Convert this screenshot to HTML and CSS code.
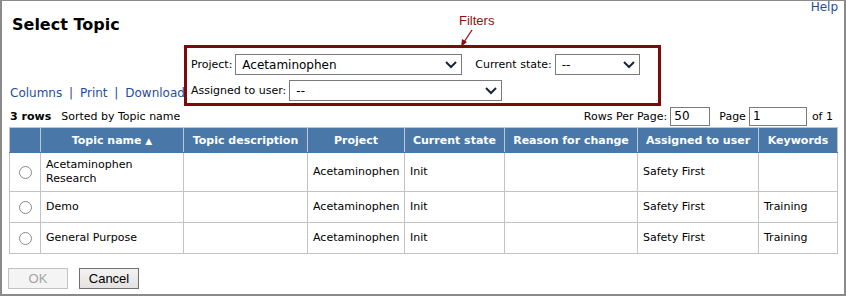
FILE: index.html
```html
<!DOCTYPE html>
<html lang="en">
<head>
    <meta charset="UTF-8">
    <title>Select Topic</title>
    <link rel="stylesheet" href="styles.css">
</head>
<body>
    <div class="window">
        <div class="top">
            <h1 class="title">Select Topic</h1>
            <a class="help" href="#">Help</a>
        </div>

        <div class="filter-row">
            <div class="links">
                <a href="#">Columns</a> <span class="sep">|</span>
                <a href="#">Print</a> <span class="sep">|</span>
                <a href="#">Download</a>
            </div>
            <div class="filters">
                <div class="note">Filters</div>
                <svg class="note-arrow" width="16" height="20" viewBox="0 0 16 20">
                    <line x1="13" y1="1" x2="5" y2="13" stroke="#8b1111" stroke-width="1.3"/>
                    <polygon points="2,18 3,10 8,13" fill="#8b1111"/>
                </svg>
                <div class="frow">
                    <label>Project:</label>
                    <div class="select sel-project">
                        <span>Acetaminophen</span>
                        <svg width="12" height="8" viewBox="0 0 12 8"><polyline points="1,1 6,6 11,1" fill="none" stroke="#1b2538" stroke-width="2"/></svg>
                    </div>
                    <label class="lbl-state">Current state:</label>
                    <div class="select sel-state">
                        <span>--</span>
                        <svg width="12" height="8" viewBox="0 0 12 8"><polyline points="1,1 6,6 11,1" fill="none" stroke="#1b2538" stroke-width="2"/></svg>
                    </div>
                </div>
                <div class="frow">
                    <label>Assigned to user:</label>
                    <div class="select sel-user">
                        <span>--</span>
                        <svg width="12" height="8" viewBox="0 0 12 8"><polyline points="1,1 6,6 11,1" fill="none" stroke="#1b2538" stroke-width="2"/></svg>
                    </div>
                </div>
            </div>
        </div>

        <div class="info-row">
            <b>3 rows</b>
            <span class="sorted">Sorted by Topic name</span>
            <span class="spacer"></span>
            <span>Rows Per Page:</span>
            <div class="box rpp">50</div>
            <span class="page-lbl">Page</span>
            <div class="box page">1</div>
            <span class="of">of 1</span>
        </div>

        <table class="grid">
            <colgroup>
                <col style="width:31px"><col style="width:143px"><col style="width:124px"><col style="width:97px">
                <col style="width:100px"><col style="width:133px"><col style="width:121px"><col style="width:79px">
            </colgroup>
            <thead>
                <tr>
                    <th></th>
                    <th>Topic name <span class="sort">&#9650;</span></th>
                    <th>Topic description</th>
                    <th>Project</th>
                    <th>Current state</th>
                    <th>Reason for change</th>
                    <th>Assigned to user</th>
                    <th>Keywords</th>
                </tr>
            </thead>
            <tbody>
                <tr class="tall">
                    <td class="pick"><span class="radio"></span></td>
                    <td>Acetaminophen<br>Research</td>
                    <td></td>
                    <td>Acetaminophen</td>
                    <td>Init</td>
                    <td></td>
                    <td>Safety First</td>
                    <td></td>
                </tr>
                <tr>
                    <td class="pick"><span class="radio"></span></td>
                    <td>Demo</td>
                    <td></td>
                    <td>Acetaminophen</td>
                    <td>Init</td>
                    <td></td>
                    <td>Safety First</td>
                    <td>Training</td>
                </tr>
                <tr>
                    <td class="pick"><span class="radio"></span></td>
                    <td>General Purpose</td>
                    <td></td>
                    <td>Acetaminophen</td>
                    <td>Init</td>
                    <td></td>
                    <td>Safety First</td>
                    <td>Training</td>
                </tr>
            </tbody>
        </table>

        <div class="buttons">
            <button class="btn" disabled>OK</button>
            <button class="btn">Cancel</button>
        </div>
    </div>
</body>
</html>
```

FILE: styles.css
```css
body {
    margin: 0;
    padding: 0;
    background: #fff;
    font-family: 'DejaVu Sans', Verdana, sans-serif;
    font-size: 11px;
    color: #000;
}
a {
    color: #1f4ea0;
    text-decoration: none;
}
.window {
    width: 835px;
    height: 293px;
    border: 2px solid #8a8a8a;
    border-top-width: 1px;
    padding: 0 0 0 7px;
    box-sizing: content-box;
    overflow: hidden;
}
.top {
    display: flex;
    justify-content: space-between;
    align-items: flex-start;
    height: 44px;
}
.title {
    margin: 14px 0 0 3px;
    font-size: 16px;
    line-height: 20px;
    font-weight: bold;
}
.help {
    margin: 0 6px 0 0;
    font-size: 12px;
    line-height: 13px;
}
.filter-row {
    display: flex;
    align-items: flex-end;
    height: 61px;
}
.links {
    width: 174px;
    font-size: 12px;
    line-height: 14px;
    padding-bottom: 6px;
    padding-left: 1px;
    white-space: nowrap;
}
.links .sep {
    color: #1f4ea0;
    margin: 0 3px;
}
.filters {
    position: relative;
    width: 467px;
    height: 49px;
    border: 3px solid #7b0a0a;
    padding: 6px 0 0 4px;
}
.note {
    position: absolute;
    left: 272px;
    top: -35px;
    color: #8b1111;
    font-family: 'Liberation Sans', Arial, sans-serif;
    font-size: 13px;
}
.note-arrow {
    position: absolute;
    left: 272px;
    top: -19px;
}
.frow {
    display: flex;
    align-items: center;
    height: 21px;
    margin-bottom: 5px;
}
.frow label {
    margin-right: 3px;
    white-space: nowrap;
}
.lbl-state {
    margin-left: 13px;
}
.select {
    display: flex;
    align-items: center;
    justify-content: space-between;
    height: 19px;
    border: 1px solid #7a7a7a;
    padding: 0 4px 0 6px;
    font-size: 12px;
    background: #fff;
}
.sel-project { width: 215px; }
.sel-state { width: 73px; }
.sel-user { width: 201px; }
.info-row {
    display: flex;
    align-items: center;
    height: 21px;
    padding-left: 1px;
    padding-right: 11px;
    white-space: nowrap;
}
.sorted {
    margin-left: 10px;
}
.spacer {
    flex: 1;
}
.box {
    height: 17px;
    border: 1px solid #7a7a7a;
    padding: 0 3px;
    font-size: 12px;
    line-height: 17px;
    margin-left: 3px;
}
.rpp { width: 32px; }
.page { width: 50px; }
.page-lbl { margin-left: 9px; }
.of { margin-left: 5px; }
.grid {
    border-collapse: collapse;
    table-layout: fixed;
    width: 829px;
}
.grid th {
    background: #4877a8;
    color: #fff;
    font-weight: bold;
    height: 24px;
    padding: 0 4px;
    border: 1px solid #bcc6d0;
    border-bottom-color: #4877a8;
    white-space: nowrap;
}
.grid th .sort {
    font-size: 9px;
}
.grid td {
    border: 1px solid #c3c3c3;
    height: 30px;
    padding: 0 5px;
    vertical-align: middle;
    line-height: 14px;
}
.grid tr.tall td {
    height: 38px;
}
.grid td.pick {
    text-align: center;
    padding: 0;
}
.radio {
    display: inline-block;
    width: 11px;
    height: 11px;
    border: 1px solid #8a8a8a;
    border-radius: 50%;
    background: #fff;
    vertical-align: middle;
}
.buttons {
    display: flex;
    gap: 11px;
    margin-top: 14px;
    margin-left: -1px;
}
.btn {
    width: 60px;
    height: 21px;
    font-family: 'Liberation Sans', Arial, sans-serif;
    font-size: 13px;
    color: #000;
    background: linear-gradient(#f3f3f3, #e2e2e2);
    border: 1px solid #707070;
    padding: 0;
}
.btn:disabled {
    color: #a3a3a3;
    background: #f4f4f4;
    border-color: #c2c2c2;
}
```
